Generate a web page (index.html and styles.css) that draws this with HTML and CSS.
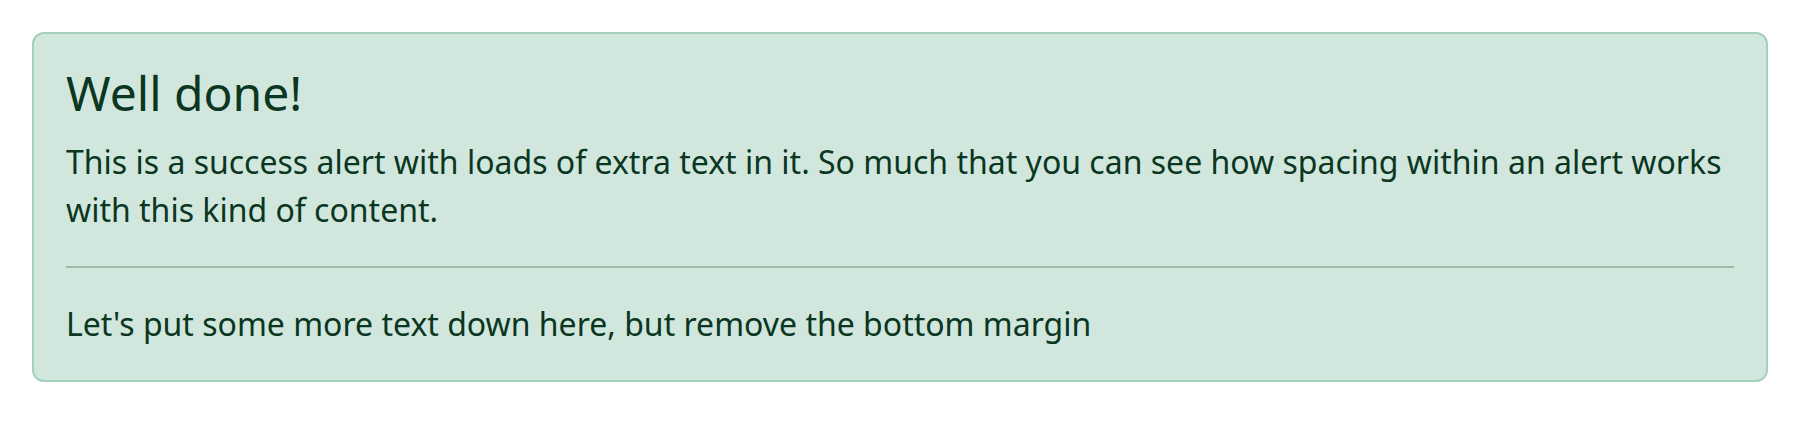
FILE: index.html
```html
<!DOCTYPE html>
<html>
<head>
    <meta charset="utf-8">
    <link rel="stylesheet" href="styles.css">
</head>
<body>
    <div class="alert alert-success">
        <h4 class="alert-heading">Well done!</h4>
        <p>This is a success alert with loads of extra text in it. So much that you can see how spacing within an alert works with this kind of content.</p>
        <hr>
        <p class="mb-0">Let's put some more text down here, but remove the bottom margin</p>
    </div>
</body>
</html>
```

FILE: styles.css
```css
body {
    margin: 32px;
    font-family: 'Noto Sans', 'Open Sans', sans-serif;
    font-size: 32px;
    line-height: 1.5;
    background: #fff;
}

.alert {
    padding: 30px 32px 32px 32px;
    border: 2px solid transparent;
    border-radius: 12px;
}

.alert-success {
    background: #d1e7dd;
    border-color: #a3cfbb;
    color: #0a3622;
}

.alert-heading {
    margin: 0 0 16px 0;
    font-size: 48px;
    font-weight: 400;
    line-height: 1.2;
    color: inherit;
}

p {
    margin: 0 0 32px 0;
}

hr {
    margin: 32px 0;
    border: 0;
    border-top: 2px solid #9eb8ac;
}

.mb-0 {
    margin-bottom: 0;
}
```
